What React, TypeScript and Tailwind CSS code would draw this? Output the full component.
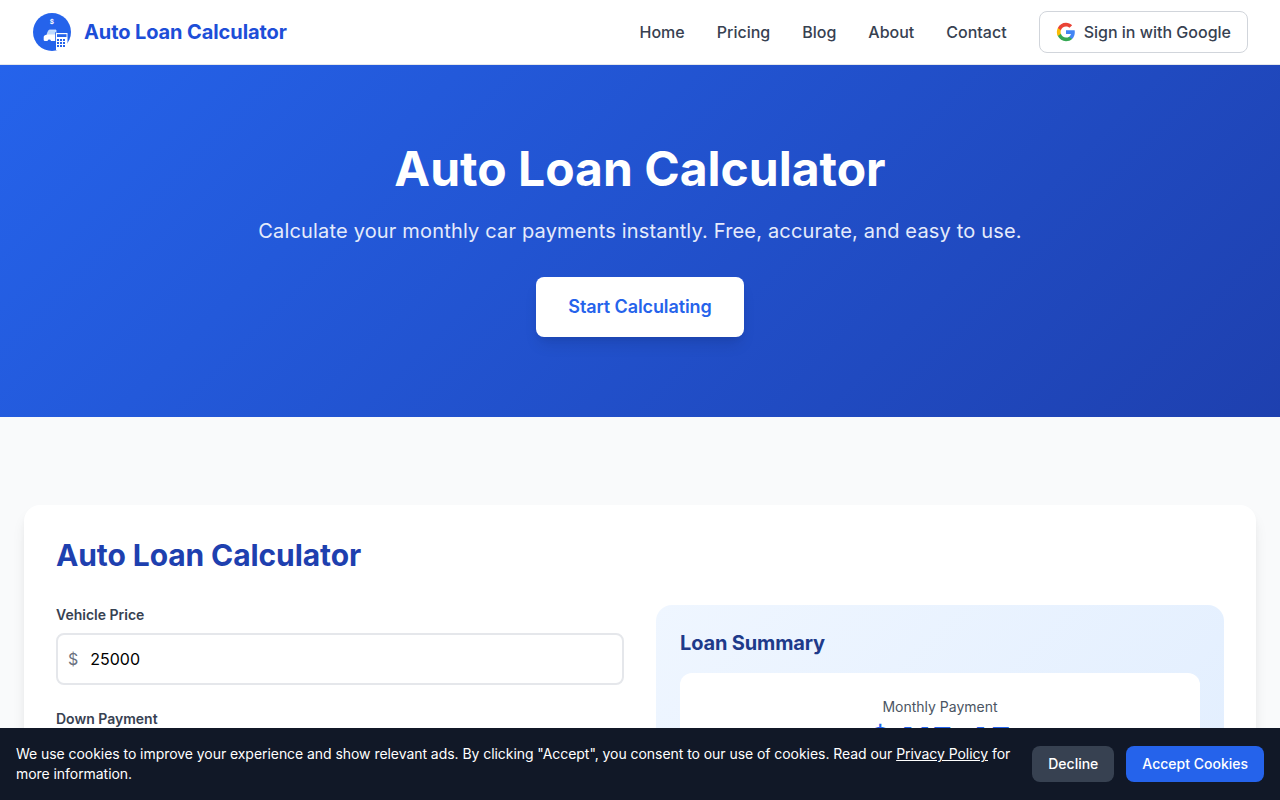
function Logo() {
  return (
    <svg width="40" height="40" viewBox="0 0 40 40" className="shrink-0">
      <circle cx="20" cy="20" r="19" fill="#2563eb" />
      <text x="20" y="11.5" textAnchor="middle" fontSize="6.5" fontWeight="700" fill="#fff" fontFamily="Inter, sans-serif">$</text>
      <path d="M15 22.5 L16.5 18.8 Q16.8 18 18 18 H24 V22.5Z" fill="#bfdbfe" stroke="#dbeafe" strokeWidth="0.8" />
      <path d="M12.5 23.5 Q14 22.5 16 22.5 H24 V29 H19 A1.8 1.8 0 0 0 15.5 29 H13 Q11.7 29 11.7 28 V25 Q11.7 24 12.5 23.5Z" fill="#fff" />
      <rect x="23.2" y="20.2" width="0.8" height="11" fill="#2563eb" />
      <rect x="24" y="21" width="11.5" height="17" fill="#fff" />
      <rect x="25" y="22.2" width="9.5" height="2.8" fill="#2563eb" />
      {[27, 30, 33].map((y) =>
        [25, 28, 31].map((x) => <rect key={`${x}-${y}`} x={x} y={y} width="2" height="2" fill="#2563eb" />)
      )}
    </svg>
  );
}

function GoogleIcon() {
  return (
    <svg width="20" height="20" viewBox="0 0 24 24" className="shrink-0">
      <path fill="#4285F4" d="M22.56 12.25c0-.78-.07-1.53-.2-2.25H12v4.26h5.92c-.26 1.37-1.04 2.53-2.21 3.31v2.77h3.57c2.08-1.92 3.28-4.74 3.28-8.09z" />
      <path fill="#34A853" d="M12 23c2.97 0 5.46-.98 7.28-2.66l-3.57-2.77c-.98.66-2.23 1.06-3.71 1.06-2.86 0-5.29-1.93-6.16-4.53H2.18v2.84C3.99 20.53 7.7 23 12 23z" />
      <path fill="#FBBC05" d="M5.84 14.09c-.22-.66-.35-1.36-.35-2.09s.13-1.43.35-2.09V7.07H2.18C1.43 8.55 1 10.22 1 12s.43 3.45 1.18 4.93l2.85-2.22.81-.62z" />
      <path fill="#EA4335" d="M12 5.38c1.62 0 3.06.56 4.21 1.64l3.15-3.15C17.45 2.09 14.97 1 12 1 7.7 1 3.99 3.47 2.18 7.07l3.66 2.84c.87-2.6 3.3-4.53 6.16-4.53z" />
    </svg>
  );
}

export default function App() {
  const links = ["Home", "Pricing", "Blog", "About", "Contact"];
  return (
    <div className="min-h-screen bg-[#f9fafb] font-['Inter',sans-serif] leading-[1.6] text-[#111827]">
      <nav className="h-[65px] bg-white border-b border-[#e5e7eb] px-8 flex items-center justify-between">
        <div className="flex items-center gap-3">
          <Logo />
          <span className="text-[20px] font-bold tracking-[-0.1px] text-[#1d4ed8]">Auto Loan Calculator</span>
        </div>
        <div className="flex items-center gap-8">
          {links.map((l) => (
            <a key={l} className="text-base font-medium text-[#374151]">{l}</a>
          ))}
          <button className="h-[42px] px-4 flex items-center gap-2 bg-white border border-[#d1d5db] rounded-lg text-base font-medium text-[#374151]">
            <GoogleIcon />
            Sign in with Google
          </button>
        </div>
      </nav>

      <section className="pt-[66px] pb-20 text-center text-white bg-[linear-gradient(135deg,#2563eb,#1e40af)]">
        <h1 className="text-[48px] font-bold leading-[1.6] mb-[7px]">Auto Loan Calculator</h1>
        <p className="text-[20px] mb-[30px] text-[#e5ebfb] tracking-[0.175px]">Calculate your monthly car payments instantly. Free, accurate, and easy to use.</p>
        <button className="h-[60px] px-8 pt-[2px] bg-white rounded-lg text-[18px] font-semibold tracking-[-0.1px] text-[#2563eb] shadow-[0_10px_15px_-3px_rgba(0,0,0,0.1),0_4px_6px_-2px_rgba(0,0,0,0.05)]">Start Calculating</button>
      </section>

      <main className="px-6 pt-[88px] pb-8">
        <div className="bg-white rounded-2xl p-8 shadow-[0_10px_15px_-3px_rgba(0,0,0,0.1),0_4px_6px_-2px_rgba(0,0,0,0.05)]">
          <h2 className="text-[30px] font-bold leading-[1.2] tracking-[-0.1px] text-[#1e40af] mt-[0.5px] mb-[31.5px]">Auto Loan Calculator</h2>
          <div className="grid grid-cols-2 gap-8">
            <div>
              <div className="mb-6">
                <label className="block text-sm font-semibold text-[#374151] pt-[0.5px] mb-[7.5px]">Vehicle Price</label>
                <div className="h-[52px] border-2 border-[#e5e7eb] rounded-lg flex items-center px-[10px] gap-3 text-base">
                  <span className="text-[#6b7280]">$</span>
                  <span className="text-black">25000</span>
                </div>
              </div>
              <div className="mb-6">
                <label className="block text-sm font-semibold text-[#374151] pt-[0.5px] mb-[7.5px]">Down Payment</label>
              </div>
            </div>
            <div className="rounded-2xl p-6 min-h-[620px] bg-[linear-gradient(135deg,#eff6ff,#dbeafe)]">
              <h3 className="text-[20px] font-bold leading-[1.4] tracking-[-0.15px] text-[#1e3a8a] mb-4">Loan Summary</h3>
              <div className="bg-white rounded-xl p-6 text-center">
                <div className="text-sm text-[#4b5563] pt-[0.5px] mb-[2px]">Monthly Payment</div>
                <div className="text-[36px] font-bold text-[#2563eb] leading-[1.2]">$415.45</div>
              </div>
            </div>
          </div>
        </div>
      </main>

      <div className="fixed bottom-0 left-0 right-0 h-[72px] bg-[#111827] px-4 flex items-center justify-between gap-[22px]">
        <p className="text-sm leading-5 tracking-[-0.053px] text-white pt-[0.5px]">
          We use cookies to improve your experience and show relevant ads. By clicking "Accept", you consent to our use of cookies. Read our <a className="underline">Privacy Policy</a> for more information.
        </p>
        <div className="flex gap-3 shrink-0">
          <button className="h-9 px-4 rounded-lg bg-[#374151] text-sm font-medium text-white">Decline</button>
          <button className="h-9 px-4 rounded-lg bg-[#2563eb] text-sm font-medium text-white">Accept Cookies</button>
        </div>
      </div>
    </div>
  );
}
